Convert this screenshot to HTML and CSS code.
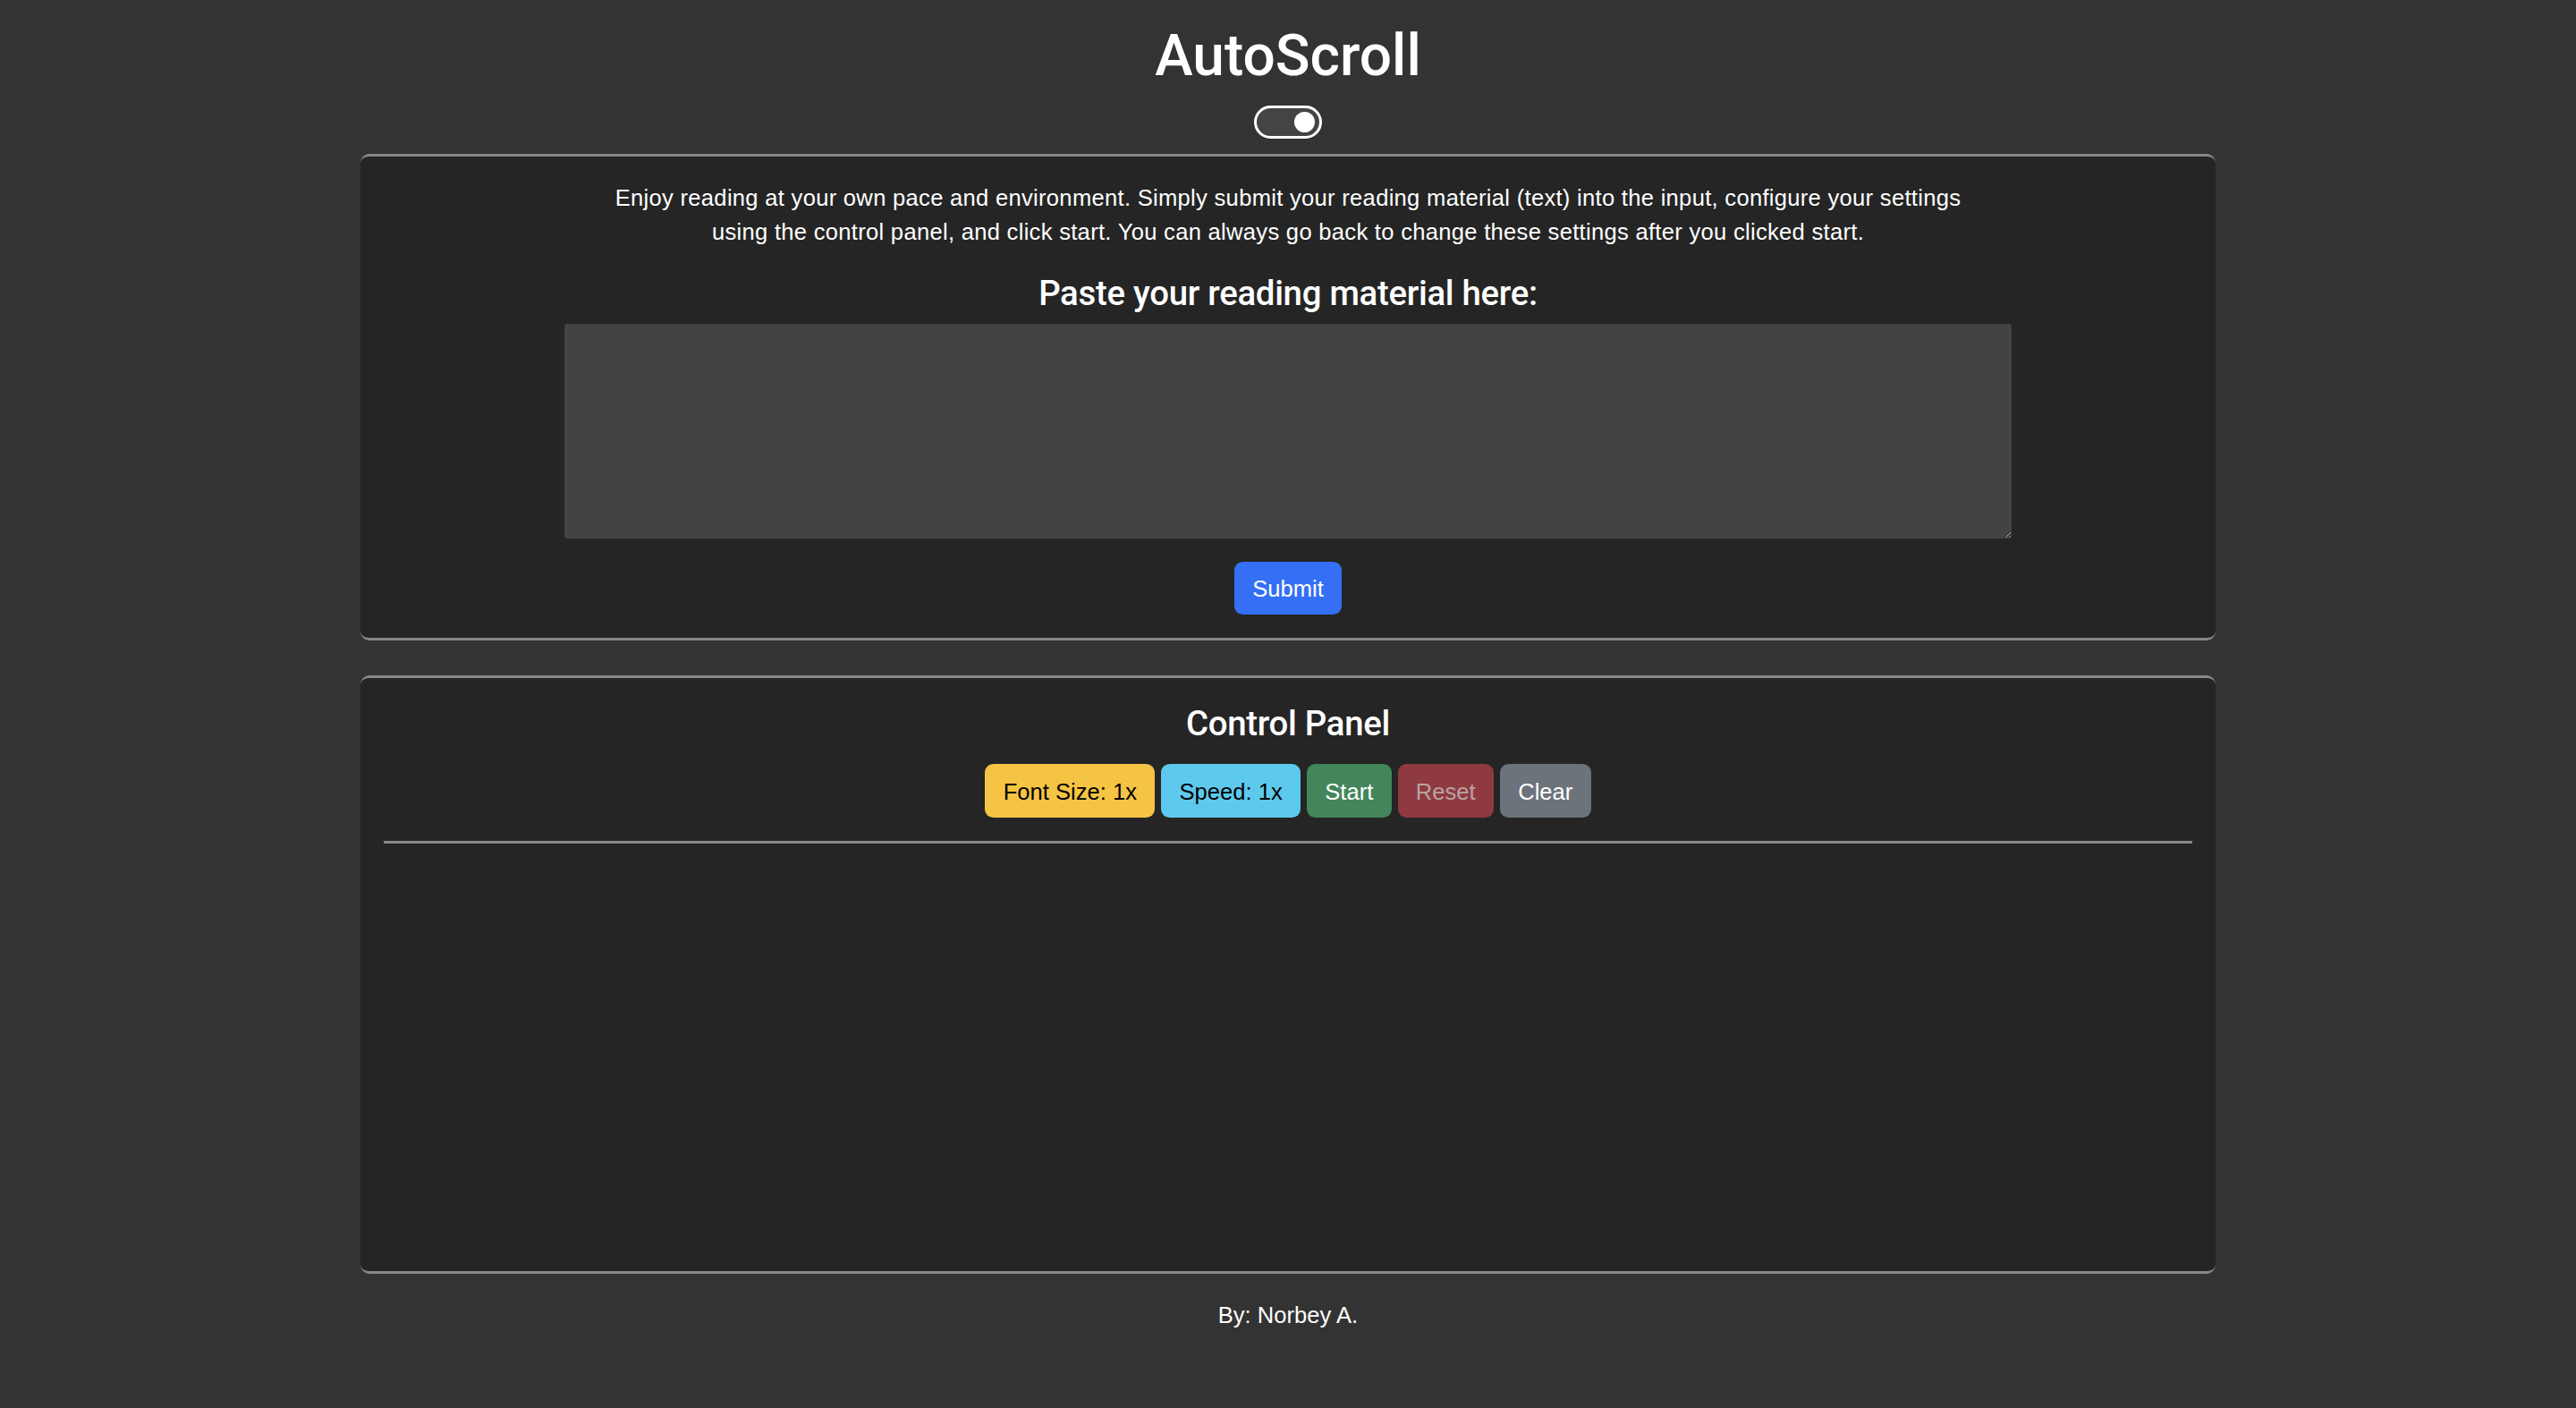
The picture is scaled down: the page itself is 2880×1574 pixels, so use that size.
FILE: index.html
```html
<!DOCTYPE html>
<html lang="en">
<head>
<meta charset="utf-8">
<title>AutoScroll</title>
<link rel="stylesheet" href="styles.css">
</head>
<body>
<div class="container">
  <header class="header">
    <h1 class="title">AutoScroll</h1>
    <label class="switch" aria-label="Dark mode">
      <span class="switch-knob"></span>
    </label>
  </header>

  <section class="card">
    <p class="intro">Enjoy reading at your own pace and environment. Simply submit your reading material (text) into the input, configure your settings<br>using the control panel, and click start. You can always go back to change these settings after you clicked start.</p>
    <h4 class="card-heading">Paste your reading material here:</h4>
    <textarea class="reading-input"></textarea>
    <div class="submit-row">
      <button class="btn btn-primary">Submit</button>
    </div>
  </section>

  <section class="card card-panel">
    <h4 class="card-heading panel-heading">Control Panel</h4>
    <div class="btn-row">
      <button class="btn btn-warning">Font Size: 1x</button>
      <button class="btn btn-info">Speed: 1x</button>
      <button class="btn btn-success">Start</button>
      <button class="btn btn-danger" disabled>Reset</button>
      <button class="btn btn-secondary">Clear</button>
    </div>
    <hr class="divider">
    <div class="reader"></div>
  </section>

  <footer class="footer">By: Norbey A.</footer>
</div>
</body>
</html>
```

FILE: styles.css
```css
html, body {
  margin: 0;
  padding: 0;
}

body {
  background: #333333;
  color: #ffffff;
  font-family: "Liberation Sans", Arial, sans-serif;
  font-size: 25.6px;
  line-height: 1.5;
}

.container {
  width: 2073.6px;
  margin: 0 auto;
}

.header {
  display: flex;
  flex-direction: column;
  align-items: center;
  padding-top: 25.4px;
}

.title {
  margin: 0;
  font-family: Roboto, "Liberation Sans", sans-serif;
  font-weight: 500;
  font-size: 64px;
  line-height: 1.2;
}

.switch {
  display: flex;
  justify-content: flex-end;
  align-items: center;
  box-sizing: border-box;
  width: 76px;
  height: 37px;
  margin-top: 16px;
  margin-bottom: 17px;
  padding-right: 5px;
  border: 3px solid #ffffff;
  border-radius: 20px;
  background: #444444;
}

.switch-knob {
  width: 23px;
  height: 23px;
  border-radius: 50%;
  background: #ffffff;
}

.card {
  background: #252525;
  border-top: 3px solid #888888;
  border-bottom: 3px solid #888888;
  border-radius: 10px;
  padding: 25.6px;
  text-align: center;
}

.card-panel {
  margin-top: 39px;
}

.intro {
  margin: 0 0 24.6px;
  padding-top: 1px;
  letter-spacing: 0.28px;
}

.card-heading {
  margin: 0 0 10.8px;
  padding-top: 2px;
  font-family: Roboto, "Liberation Sans", sans-serif;
  font-weight: 500;
  font-size: 38.4px;
  line-height: 1.2;
  letter-spacing: -0.3px;
}

.panel-heading {
  padding-top: 3px;
  margin-bottom: 22px;
}

.reading-input {
  display: block;
  box-sizing: border-box;
  width: 80%;
  height: 240px;
  margin: 0 auto;
  padding: 9.6px 19.2px;
  border: none;
  border-radius: 4px;
  background: #434343;
  color: #ffffff;
  font-family: "Liberation Sans", Arial, sans-serif;
  font-size: 25.6px;
  resize: vertical;
}

.submit-row {
  margin-top: 25.6px;
}

.btn {
  display: inline-block;
  box-sizing: border-box;
  padding: 10.6px 19.2px 8.6px;
  border: 1.6px solid transparent;
  border-radius: 9.6px;
  font-family: "Liberation Sans", Arial, sans-serif;
  font-size: 25.6px;
  line-height: 1.5;
  cursor: pointer;
}

.btn-primary {
  background: #346ff5;
  color: #ffffff;
}

.btn-warning {
  background: #f6c444;
  color: #000000;
}

.btn-info {
  background: #5dc9ed;
  color: #000000;
}

.btn-success {
  background: #42865a;
  color: #ffffff;
}

.btn-danger {
  background: #8f3a3f;
  color: #b9a3a5;
}

.btn-secondary {
  background: #6c737b;
  color: #ffffff;
}

.divider {
  margin: 25.6px 0;
  border: none;
  border-top: 3px solid #888888;
}

.reader {
  height: 427px;
}

.footer {
  margin-top: 25.6px;
  padding-top: 2px;
  text-align: center;
}
```
